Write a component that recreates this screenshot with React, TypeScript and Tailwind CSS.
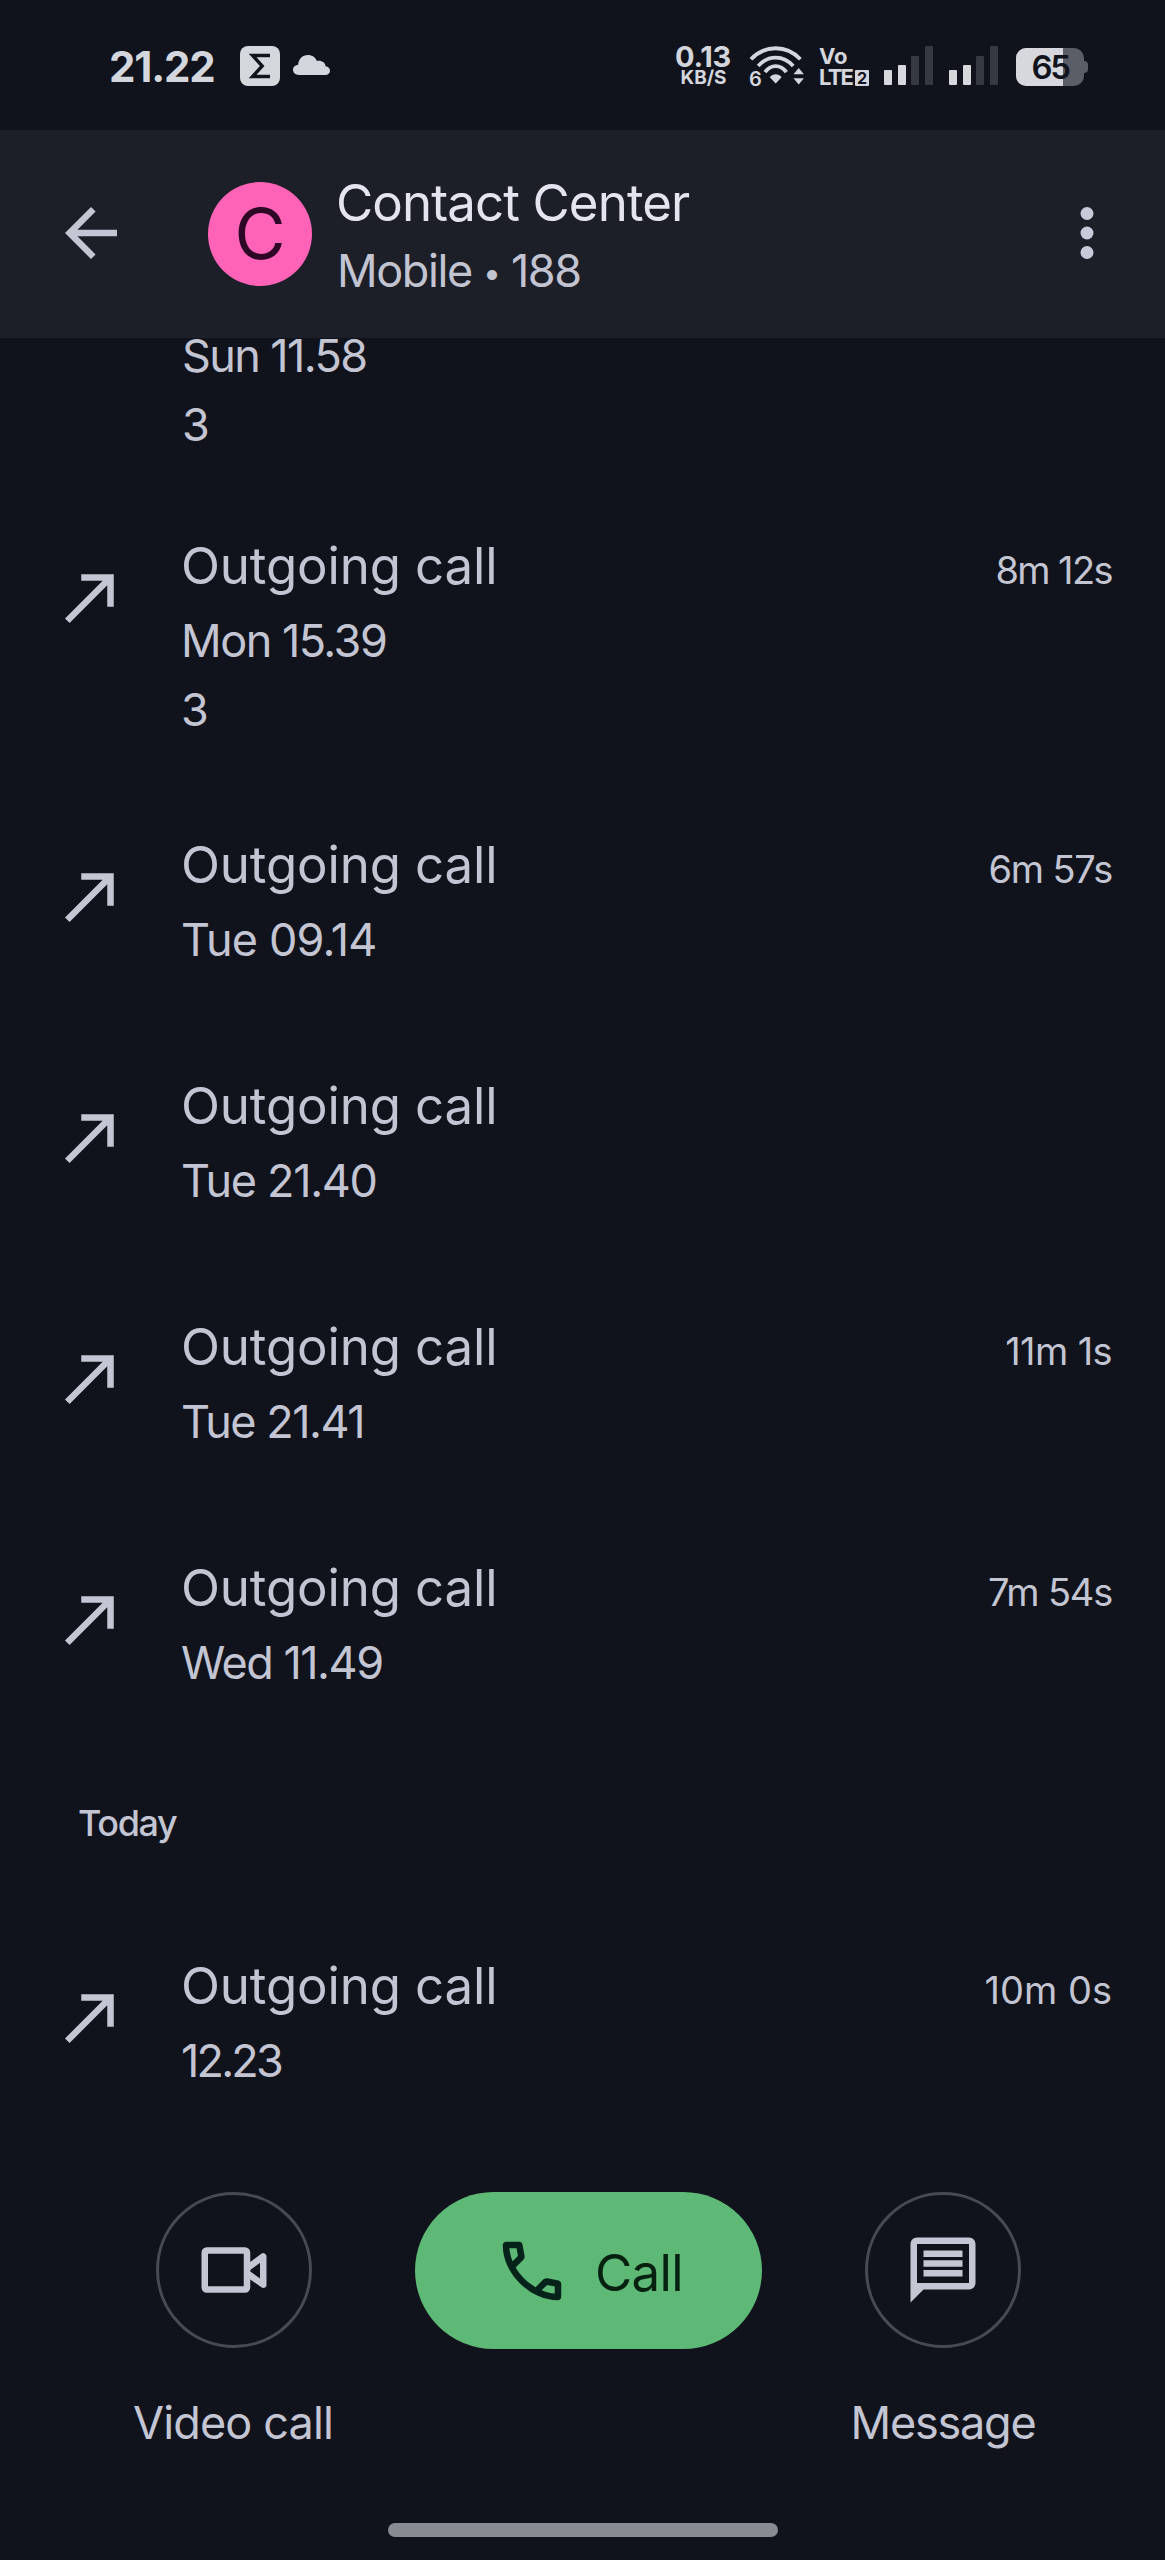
interface CallEntry {
  time: string
  timeClass: string
  duration?: string
  durationClass?: string
  sim?: string
  rowClass: string
}

const calls: CallEntry[] = [
  { time: 'Mon 15.39', timeClass: 'tracking-[-1.5px]', duration: '8m 12s', durationClass: 'tracking-[-1.6px]', sim: '3', rowClass: 'h-[299px]' },
  { time: 'Tue 09.14', timeClass: 'tracking-[-0.8px]', duration: '6m 57s', durationClass: 'tracking-[-1.2px]', rowClass: 'h-[241px]' },
  { time: 'Tue 21.40', timeClass: 'tracking-[-1.3px]', rowClass: 'h-[241px]' },
  { time: 'Tue 21.41', timeClass: 'tracking-[-1.5px]', duration: '11m 1s', durationClass: 'tracking-[-0.6px]', rowClass: 'h-[241px]' },
  { time: 'Wed 11.49', timeClass: 'tracking-[-1.5px]', duration: '7m 54s', durationClass: 'tracking-[-1.2px]', rowClass: 'h-[241px]' },
]

const todayCall: CallEntry = {
  time: '12.23',
  timeClass: 'tracking-[-2.8px]',
  duration: '10m 0s',
  durationClass: 'tracking-[0px]',
  rowClass: 'h-[246px]',
}

function WifiIcon() {
  return (
    <svg width="56" height="44" viewBox="0 0 56 44" fill="none" className="text-[#d4d6dd]">
      <g stroke="currentColor" strokeWidth="3.8">
        <path d="M2 14.2C16-.4 37.4-.4 51.4 14.2" />
        <path d="M9.2 21C19 9.8 34.4 9.8 44.2 21" />
        <path d="M16 27.2C22 19.2 31.4 19.2 37.4 27.2" />
      </g>
      <path d="M20.8 32.2c3.4-3.8 8.4-3.8 11.8 0l-5.900 6.400z" fill="currentColor" />
      <path d="M49.7 23l5.2 6.2H44.5zM49.7 39.4l5.2-6.200H44.5z" fill="currentColor" />
      <text x="0" y="41" fontSize="20" fontWeight="600" fill="currentColor" fontFamily="Inter, sans-serif">
        6
      </text>
    </svg>
  )
}

function SignalBars() {
  return (
    <div className="flex h-[39px] w-[49px] items-end justify-between">
      <div className="h-[15px] w-2 rounded-[1px] bg-[#d6d8de]" />
      <div className="h-[20px] w-2 rounded-[1px] bg-[#d6d8de]" />
      <div className="h-[29px] w-2 rounded-[1px] bg-[#363942]" />
      <div className="h-[39px] w-2 rounded-[1px] bg-[#363942]" />
    </div>
  )
}

function Battery() {
  return (
    <div className="flex items-center">
      <div className="relative flex h-[38px] w-[68px] items-center justify-center overflow-hidden rounded-[10px] bg-[#5b5e67]">
        <div className="absolute inset-y-0 left-0 w-[47px] bg-[#d6d8de]" />
        <span className="relative text-[33px] leading-none font-semibold tracking-[-2.5px] text-[#11141d]">65</span>
      </div>
      <div className="h-[12px] w-[4px] rounded-r-[4px] bg-[#5b5e67]" />
    </div>
  )
}

function StatusBar() {
  return (
    <div className="flex h-[130px] items-start pt-[45px] pr-[77px] pl-[109px] text-[#d4d6dd]">
      <span className="mt-px w-[131px] text-[42px] leading-[42px] font-bold tracking-[-1.2px]">21.22</span>
      <svg width="40" height="40" viewBox="0 0 40 40" className="mt-px">
        <rect width="40" height="40" rx="8" fill="#d4d7db" />
        <path d="M30 9.500H12.600L22.200 20l-9.600 10.500H30" fill="none" stroke="#11141d" strokeWidth="3.4" />
      </svg>
      <svg width="37" height="20" viewBox="0 0 37 20" className="mt-[10px] ml-[13px]" fill="#d4d6dd">
        <path d="M6 20C2.400 20 0 17.600 0 14.800 0 12 2.400 10 5.200 9.800 5.400 4.200 9.400 0 15 0c4.200 0 7.400 2.200 8.900 6 5-.8 8.300 1.800 8.700 5.200 2.500.4 4.400 2 4.400 4.500 0 2.500-2 4.300-4.600 4.300z" />
      </svg>
      <div className="ml-auto flex items-start">
        <div className="flex w-[56px] flex-col items-center">
          <span className="-mt-px text-[29px] leading-[25px] font-bold tracking-[-0.3px]">0.13</span>
          <span className="ml-px text-[19px] leading-[18px] font-bold">KB/S</span>
        </div>
        <div className="ml-[18px]">
          <WifiIcon />
        </div>
        <div className="ml-[14px] flex w-[50px] flex-col">
          <span className="mt-px text-[22px] leading-[21px] font-bold">Vo</span>
          <div className="flex items-center">
            <span className="w-[36px] text-[22px] leading-[21px] font-bold tracking-[-1.8px]">LTE</span>
            <span className="h-[16px] w-[14px] rounded-[1px] bg-[#d4d6dd] text-center text-[16px] leading-[16px] font-bold text-[#11141d]">2</span>
          </div>
        </div>
        <div className="mt-px ml-[15px]">
          <SignalBars />
        </div>
        <div className="mt-px ml-[16px]">
          <SignalBars />
        </div>
        <div className="mt-[3px] ml-[18px]">
          <Battery />
        </div>
      </div>
    </div>
  )
}

function Header() {
  return (
    <header className="relative z-10 flex h-[208px] items-start bg-[#1d1f28] pt-[52px] pr-[39px] pl-[52px]">
      <svg width="78" height="78" viewBox="0 0 24 24" className="mt-[12px] fill-[#c4c6d4]">
        <path d="M20 11H7.830l5.590-5.590L12 4l-8 8 8 8 1.410-1.410L7.830 13H20v-2z" />
      </svg>
      <div className="ml-[78px] flex size-[104px] items-center justify-center rounded-full bg-[#ff63b8]">
        <span className="text-[70px] leading-none text-[#2e0626]">C</span>
      </div>
      <div className="ml-[24px] flex flex-col">
        <span className="-mt-[12px] text-[51px] leading-[66px] tracking-[-0.9px] text-[#e3e4f0]">Contact Center</span>
        <span className="ml-px text-[45px] leading-[69px] tracking-[-1.4px] text-[#c2c4d1]">
          Mobile <span className="align-[3px] text-[32px]">•</span> 188
        </span>
      </div>
      <svg width="78" height="78" viewBox="0 0 24 24" className="mt-[12px] ml-auto fill-[#c8cada]">
        <circle cx="12" cy="6" r="2" />
        <circle cx="12" cy="12" r="2" />
        <circle cx="12" cy="18" r="2" />
      </svg>
    </header>
  )
}

function CallRow({ entry }: { entry: CallEntry }) {
  return (
    <div className={`flex items-start pr-[53px] pl-[52px] ${entry.rowClass}`}>
      <svg width="78" height="78" viewBox="0 0 24 24" className="mt-[32px] fill-[#c4c6d4]">
        <path d="M9 5v2h6.590L4 18.590 5.410 20 17 8.410V15h2V5H9z" />
      </svg>
      <div className="ml-[51px] flex flex-col">
        <span className="text-[51px] leading-[80px] tracking-[-0.15px]">Outgoing call</span>
        <span className={`text-[45px] leading-[69px] ${entry.timeClass}`}>{entry.time}</span>
        {entry.sim && <span className="text-[45px] leading-[69px]">{entry.sim}</span>}
      </div>
      {entry.duration && (
        <span className={`mt-[5px] ml-auto text-[38px] leading-[79px] ${entry.durationClass}`}>{entry.duration}</span>
      )}
    </div>
  )
}

function VideoIcon() {
  return (
    <svg width="78" height="78" viewBox="0 0 24 24" fill="none" stroke="#c4c6d4" strokeWidth="2" strokeLinejoin="round">
      <rect x="3" y="6" width="13" height="12" rx="0.6" />
      <path d="M16 11.500L21 7.800v8.700L16 13" />
    </svg>
  )
}

function MessageIcon() {
  return (
    <svg width="78" height="78" viewBox="0 0 24 24" fill="#c4c6d4">
      <path d="M4 4h16v12H4V4m0-2c-1.100 0-2 .9-2 2v18l4-4h14c1.100 0 2-.9 2-2V4c0-1.100-.9-2-2-2H4zm2 4h12v2H6zm0 3h12v2H6zm0 3h12v2H6z" />
    </svg>
  )
}

function PhoneIcon() {
  return (
    <svg width="78" height="78" viewBox="0 -960 960 960" fill="#05231a">
      <path d="M798-120q-125 0-247-54.500T329-329Q229-429 174.500-551T120-798q0-18 12-30t30-12h162q14 0 25 9.500t13 22.500l26 140q2 16-1 27t-11 19l-97 98q20 37 47.500 71.500T387-386q31 31 65 57.500t72 48.500l94-94q9-9 23.500-13.500T670-390l138 28q14 4 23 14.500t9 23.500v162q0 18-12 30t-30 12ZM241-600l66-66-17-94h-89q5 41 14 81t26 79Zm358 358q39 17 79.500 27t81.500 13v-88l-94-19-67 67Z" />
    </svg>
  )
}

function Actions() {
  return (
    <div className="flex h-[368px] flex-col items-center">
      <div className="flex w-full items-start pl-[114px]">
        <div className="flex w-[240px] flex-col items-center">
          <div className="flex size-[156px] items-center justify-center rounded-full border-[3px] border-[#484a52]">
            <VideoIcon />
          </div>
          <span className="mt-[38px] -ml-[2px] text-[45px] leading-[73px] tracking-[-0.85px]">Video call</span>
        </div>
        <button className="ml-[61px] flex h-[157px] w-[347px] items-center rounded-full bg-[#5db975] pl-[78px]">
          <PhoneIcon />
          <span className="mt-[3px] ml-[24px] text-[51px] leading-none tracking-[-0.7px] text-[#06210f]">Call</span>
        </button>
        <div className="ml-[81px] flex w-[200px] flex-col items-center">
          <div className="flex size-[156px] items-center justify-center rounded-full border-[3px] border-[#484a52]">
            <MessageIcon />
          </div>
          <span className="mt-[38px] text-[45px] leading-[73px] tracking-[-1.2px]">Message</span>
        </div>
      </div>
      <div className="mt-auto mb-[23px] h-[14px] w-[390px] rounded-full bg-[#898b92]" />
    </div>
  )
}

export default function App() {
  return (
    <div className="flex h-[2560px] w-[1165px] flex-col overflow-hidden bg-[#11131c] font-['Inter',sans-serif] text-[#c3c5d3]">
      <StatusBar />
      <Header />
      <main className="-mt-[18px] flex flex-col">
        <div className="flex h-[206px] flex-col pt-px pl-[182px] text-[45px] leading-[69px]">
          <span className="tracking-[-1.6px]">Sun 11.58</span>
          <span>3</span>
        </div>
        {calls.map((entry) => (
          <CallRow key={entry.time} entry={entry} />
        ))}
        <h2 className="h-[157px] pt-[10px] pl-[78px] text-[36px] leading-[48px] font-medium tracking-[-1.4px]">Today</h2>
        <CallRow entry={todayCall} />
      </main>
      <Actions />
    </div>
  )
}
